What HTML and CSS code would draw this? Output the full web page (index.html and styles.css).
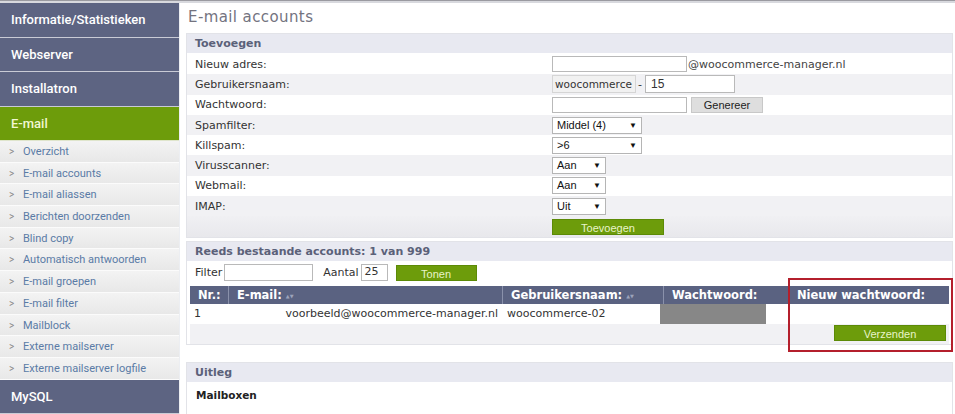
FILE: index.html
```html
<!DOCTYPE html>
<html lang="nl">
<head>
    <meta charset="UTF-8">
    <title>E-mail accounts</title>
    <link rel="stylesheet" href="styles.css">
</head>
<body>
    <div class="topline"></div>
    <div class="page">
        <!-- Sidebar -->
        <div class="sidebar">
            <div class="menu-item">Informatie/Statistieken</div>
            <div class="menu-item">Webserver</div>
            <div class="menu-item">Installatron</div>
            <div class="menu-item active">E-mail</div>
            <div class="sub-item"><span class="gt">&gt;</span>Overzicht</div>
            <div class="sub-item"><span class="gt">&gt;</span>E-mail accounts</div>
            <div class="sub-item"><span class="gt">&gt;</span>E-mail aliassen</div>
            <div class="sub-item"><span class="gt">&gt;</span>Berichten doorzenden</div>
            <div class="sub-item"><span class="gt">&gt;</span>Blind copy</div>
            <div class="sub-item"><span class="gt">&gt;</span>Automatisch antwoorden</div>
            <div class="sub-item"><span class="gt">&gt;</span>E-mail groepen</div>
            <div class="sub-item"><span class="gt">&gt;</span>E-mail filter</div>
            <div class="sub-item"><span class="gt">&gt;</span>Mailblock</div>
            <div class="sub-item"><span class="gt">&gt;</span>Externe mailserver</div>
            <div class="sub-item"><span class="gt">&gt;</span>Externe mailserver logfile</div>
            <div class="menu-item">MySQL</div>
        </div>

        <!-- Content -->
        <div class="content">
            <h1 class="page-title">E-mail accounts</h1>

            <div class="panel">
                <div class="panel-header">Toevoegen</div>
                <div class="form-row">
                    <span>Nieuw adres:</span>
                    <div class="field"><span class="input w135"></span><span class="domain">@woocommerce-manager.nl</span></div>
                </div>
                <div class="form-row alt">
                    <span>Gebruikersnaam:</span>
                    <div class="field"><span class="prefix">woocommerce</span><span class="dash">-</span><span class="input tall w90">15</span></div>
                </div>
                <div class="form-row">
                    <span>Wachtwoord:</span>
                    <div class="field"><span class="input w135"></span><span class="btn-gray">Genereer</span></div>
                </div>
                <div class="form-row alt">
                    <span>Spamfilter:</span>
                    <div class="field"><span class="select w90">Middel (4)<i>&#9660;</i></span></div>
                </div>
                <div class="form-row">
                    <span>Killspam:</span>
                    <div class="field"><span class="select w90">&gt;6<i>&#9660;</i></span></div>
                </div>
                <div class="form-row alt">
                    <span>Virusscanner:</span>
                    <div class="field"><span class="select w54">Aan<i>&#9660;</i></span></div>
                </div>
                <div class="form-row">
                    <span>Webmail:</span>
                    <div class="field"><span class="select w54">Aan<i>&#9660;</i></span></div>
                </div>
                <div class="form-row alt">
                    <span>IMAP:</span>
                    <div class="field"><span class="select w54">Uit<i>&#9660;</i></span></div>
                </div>
                <div class="form-row footer-row">
                    <span></span>
                    <div class="field"><span class="btn-green w112">Toevoegen</span></div>
                </div>
            </div>

            <div class="panel">
                <div class="panel-header">Reeds bestaande accounts: 1 van 999</div>
                <div class="filter-row">
                    <span>Filter</span>
                    <span class="input w88"></span>
                    <span class="aantal">Aantal</span>
                    <span class="input w27">25</span>
                    <span class="btn-green w81">Tonen</span>
                </div>
                <div class="accounts">
                    <div class="table-head">
                        <div class="col-nr">Nr.:</div>
                        <div class="col-mail">E-mail: <small>&#9650;&#9660;</small></div>
                        <div class="col-user">Gebruikersnaam: <small>&#9650;&#9660;</small></div>
                        <div class="col-pass">Wachtwoord:</div>
                        <div class="col-new">Nieuw wachtwoord:</div>
                    </div>
                    <div class="table-row">
                        <div class="col-nr">1</div>
                        <div class="col-mail mail-value">voorbeeld@woocommerce-manager.nl</div>
                        <div class="col-user">woocommerce-02</div>
                        <div class="col-pass"><span class="hidden-pass"></span></div>
                        <div class="col-new"></div>
                    </div>
                    <div class="table-row alt">
                        <div class="send"><span class="btn-green w112">Verzenden</span></div>
                    </div>
                </div>
                <div class="highlight"></div>
            </div>

            <div class="panel last">
                <div class="panel-header">Uitleg</div>
                <div class="explain-title">Mailboxen</div>
                <div class="explain-text">Spamfilter</div>
            </div>
        </div>
    </div>
</body>
</html>
```

FILE: styles.css
```css
:root {
    --slate: #5d6482;
    --green: #6d9c0b;
    --panel-head: #e8e9f1;
    --row-alt: #f1f1f4;
    --border: #e2e3e8;
    --link: #5a7ba6;
}

* {
    box-sizing: border-box;
    margin: 0;
    padding: 0;
}

body {
    background: #fff;
    font-family: 'DejaVu Sans', Verdana, sans-serif;
    font-size: 11px;
    color: #333;
    height: 414px;
    overflow: hidden;
}

.topline {
    height: 3px;
    background: #d8d9de;
    border-top: 1px solid #9a9aa0;
}

.page {
    display: flex;
}

/* sidebar */
.sidebar {
    width: 179px;
    flex: none;
    font-family: Roboto, 'Open Sans', sans-serif;
}

.menu-item {
    height: 34.5px;
    line-height: 33px;
    padding-left: 11px;
    background: var(--slate);
    color: #fff;
    font-size: 13px;
    font-weight: 500;
    border-bottom: 1px solid #c9cbd6;
}

.menu-item.active {
    background: var(--green);
    color: #f1f7d4;
    border-bottom: 1px solid #dfe5cc;
}

.sub-item {
    height: 21.7px;
    line-height: 21px;
    padding-left: 9px;
    background: linear-gradient(#f3f3f3, #e8e8e8);
    border-bottom: 1px solid #fbfbfb;
    color: var(--link);
    font-size: 11px;
}

.sub-item .gt {
    display: inline-block;
    width: 14px;
    color: #888;
    font-size: 10px;
}

/* content */
.content {
    flex: 1;
    padding-left: 6px;
    border-left: 1px solid #eceef2;
}

.page-title {
    font-size: 15px;
    font-weight: normal;
    color: #73737f;
    height: 30px;
    line-height: 29px;
    padding-left: 2px;
    letter-spacing: 0.4px;
}

.panel {
    position: relative;
    width: 767px;
    border: 1px solid var(--border);
    margin-bottom: 3px;
}

.panel.last {
    margin-top: 17px;
    border-bottom: none;
}

.panel-header {
    height: 19px;
    line-height: 19px;
    padding-left: 8px;
    background: var(--panel-head);
    color: #5b6179;
    font-weight: bold;
    margin-bottom: 1px;
}

.form-row {
    display: grid;
    grid-template-columns: 357px 1fr;
    align-items: center;
    height: 20.3px;
    padding-left: 8px;
}

.form-row.alt {
    background: var(--row-alt);
}

.form-row.footer-row {
    background: linear-gradient(#f0f0f3, #e8e8ec);
}

.field {
    display: flex;
    align-items: center;
}

.input {
    display: inline-block;
    height: 16px;
    line-height: 14px;
    border: 1px solid #b9b9b9;
    background: #fff;
    padding-left: 3px;
    font-family: Verdana, 'DejaVu Sans', sans-serif;
}

.input.tall {
    height: 18px;
    line-height: 16px;
    font-family: 'Liberation Sans', Arial, sans-serif;
    font-size: 12px;
    padding-left: 5px;
}

.domain {
    margin-left: 1px;
    color: #444;
}

.prefix {
    height: 18px;
    line-height: 16px;
    width: 84px;
    padding-left: 2px;
    border: 1px solid #d5d5d5;
    background: #f1f1f1;
    font-size: 10.5px;
}

.dash {
    margin: 0 3px 0 2px;
    width: 4px;
}

.btn-gray {
    display: inline-block;
    width: 72px;
    height: 16px;
    line-height: 14px;
    margin-left: 4px;
    text-align: center;
    background: #dedede;
    border: 1px solid #c8c8c8;
    font-family: 'Liberation Sans', Arial, sans-serif;
    font-size: 11px;
    color: #222;
}

.select {
    position: relative;
    display: inline-block;
    height: 17px;
    line-height: 15px;
    padding-left: 4px;
    border: 1px solid #b5b5b5;
    background: #fff;
    font-family: 'Liberation Sans', Arial, sans-serif;
    font-size: 11px;
    color: #111;
}

.select i {
    position: absolute;
    right: 4px;
    top: 0;
    font-style: normal;
    font-size: 8px;
    color: #111;
}

.btn-green {
    display: inline-block;
    height: 16px;
    line-height: 16px;
    text-align: center;
    background: var(--green);
    border: 1px solid #5c8a06;
    color: #e8f4c8;
    font-family: 'Liberation Sans', Arial, sans-serif;
    font-size: 11px;
}

.w135 { width: 135px; }
.w90 { width: 90px; }
.w54 { width: 54px; }
.w112 { width: 112px; }
.w88 { width: 89px; }
.w27 { width: 27px; }
.w81 { width: 81px; }

.filter-row {
    display: flex;
    align-items: center;
    height: 22px;
    padding-left: 8px;
    margin-bottom: 2px;
}

.filter-row .input {
    height: 17px;
    margin-left: 2px;
}

.aantal {
    margin-left: 10px;
}

.filter-row .btn-green {
    margin-left: 8px;
}

.accounts {
    margin: 0 3px 0 3px;
}

.table-head,
.table-row {
    display: grid;
    grid-template-columns: 38px 274px 161px 125px 1fr;
    height: 18px;
    align-items: center;
}

.table-head {
    background: #5a6281;
    color: #fff;
    font-weight: bold;
    font-size: 11.5px;
}

.table-head > div {
    height: 18px;
    line-height: 18px;
    padding-left: 8px;
    border-left: 1px solid #8a91ab;
}

.table-head > div:first-child {
    border-left: none;
}

.table-head small {
    font-size: 5px;
    color: #9ca3bb;
    vertical-align: middle;
}

.table-row {
    height: 20px;
}

.table-row > div {
    padding-left: 4px;
}

.table-row.alt {
    display: block;
    background: var(--row-alt);
}

.mail-value {
    text-align: right;
    padding-right: 4px;
}

.table-row .col-user {
    padding-left: 5px;
}

.hidden-pass {
    display: block;
    width: 106px;
    height: 20px;
    margin-left: -7px;
    background: #878787;
}

.send {
    display: flex;
    justify-content: flex-end;
    padding: 1px 3px 0 0 !important;
}

.highlight {
    position: absolute;
    left: 601px;
    top: 36px;
    width: 165px;
    height: 74px;
    border: 2px solid #b41f2c;
}

.explain-title {
    font-weight: bold;
    font-size: 10.5px;
    color: #222;
    padding: 6px 0 0 9px;
    height: 24px;
}

.explain-text {
    padding: 5px 0 0 9px;
}
```
